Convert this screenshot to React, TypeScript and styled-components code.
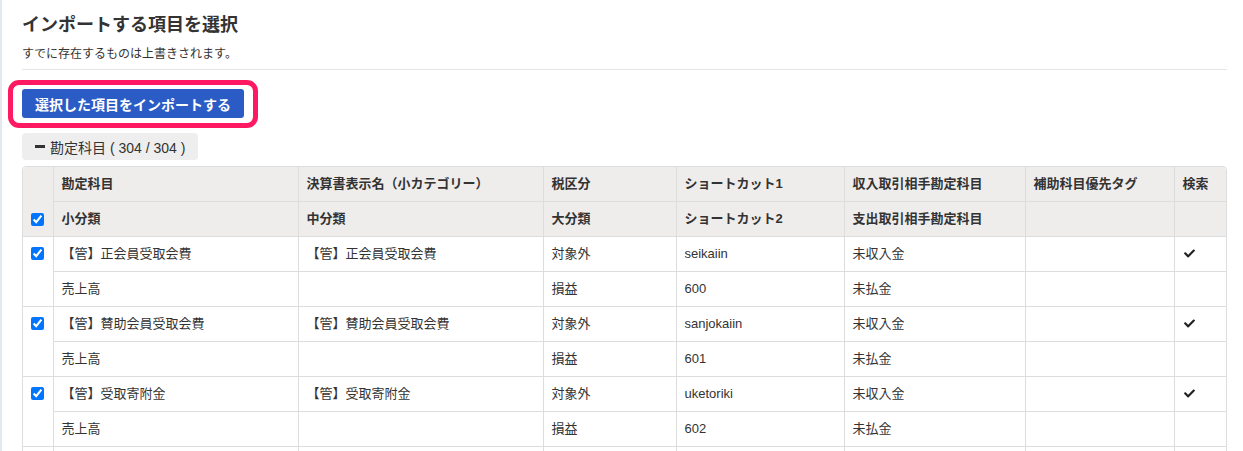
import styled, { createGlobalStyle } from "styled-components";
import { FaCheck } from "react-icons/fa";

const GlobalStyle = createGlobalStyle`
  html, body {
    margin: 0;
    background: #ffffff;
  }
  body {
    font-family: "Liberation Sans", "Noto Sans CJK JP", sans-serif;
    color: #333333;
  }
`;

const Page = styled.div`
  min-height: 451px;
  border-left: 2px solid #e4e8f0;
  padding: 13px 16px 0 20px;
  box-sizing: border-box;
`;

const Title = styled.h2`
  margin: 0;
  font-size: 18px;
  line-height: 25px;
  font-weight: bold;
  color: #333333;
`;

const Lead = styled.p`
  margin: 7px 0 0;
  font-size: 12px;
  line-height: 18px;
`;

const Divider = styled.hr`
  margin: 6px 0 0;
  border: none;
  border-top: 1px solid #e6e6e6;
`;

const ActionRow = styled.div`
  margin-top: 19px;
  display: flex;
`;

const Highlight = styled.div`
  position: relative;
  &::after {
    content: "";
    position: absolute;
    top: -9px;
    left: -14px;
    right: -14px;
    bottom: -10px;
    border: 5px solid #ff1862;
    border-radius: 11px;
    pointer-events: none;
  }
`;

const PrimaryButton = styled.button`
  height: 29px;
  padding: 0 13px;
  border: none;
  border-radius: 3px;
  background: #2b5cc6;
  color: #ffffff;
  font-family: inherit;
  font-size: 14px;
  font-weight: bold;
  cursor: pointer;
`;

const TabBlock = styled.div`
  margin-top: 15px;
  display: flex;
`;

const GroupTab = styled.div`
  display: inline-flex;
  align-items: center;
  gap: 5px;
  height: 27px;
  padding: 0 13px;
  background: #eeeeee;
  border-radius: 4px;
  font-size: 14px;
  color: #333333;
`;

const MinusBar = styled.span`
  width: 10px;
  height: 3px;
  background: #333333;
`;

const TableFrame = styled.div`
  margin-top: 6px;
  border: 1px solid #dddddd;
  border-radius: 4px;
  overflow: hidden;
`;

const Table = styled.table`
  width: 100%;
  table-layout: fixed;
  border-collapse: collapse;
  border-style: hidden;
  font-size: 13px;
`;

const Row = styled.tr<{ $top?: boolean }>`
  height: ${(p) => (p.$top ? "34px" : "35px")};
`;

const Cell = styled.td<{ $head?: boolean }>`
  padding: 0 8px;
  border: 1px solid #dddddd;
  background: ${(p) => (p.$head ? "#efedeb" : "#ffffff")};
  font-weight: ${(p) => (p.$head ? "bold" : "normal")};
  color: #333333;
  text-align: left;
  line-height: 18px;
  vertical-align: middle;
  white-space: nowrap;
  overflow: hidden;
`;

const CheckCell = styled(Cell)<{ $bottom?: boolean }>`
  padding: ${(p) => (p.$bottom ? "0 0 10px 0" : "10px 0 0 0")};
  vertical-align: ${(p) => (p.$bottom ? "bottom" : "top")};
`;

const Box = styled.input`
  width: 13px;
  height: 13px;
  margin: 0 0 0 8px;
  display: block;
`;

const Tick = styled(FaCheck)`
  display: block;
  width: 11px;
  height: 11px;
  color: #222222;
  margin-left: 1px;
`;

type Account = {
  name: string;
  display: string;
  tax: string;
  short1: string;
  income: string;
  tag: string;
  search: boolean;
  small: string;
  large: string;
  short2: string;
  expense: string;
};

const accounts: Account[] = [
  {
    name: "【管】正会員受取会費",
    display: "【管】正会員受取会費",
    tax: "対象外",
    short1: "seikaiin",
    income: "未収入金",
    tag: "",
    search: true,
    small: "売上高",
    large: "損益",
    short2: "600",
    expense: "未払金",
  },
  {
    name: "【管】賛助会員受取会費",
    display: "【管】賛助会員受取会費",
    tax: "対象外",
    short1: "sanjokaiin",
    income: "未収入金",
    tag: "",
    search: true,
    small: "売上高",
    large: "損益",
    short2: "601",
    expense: "未払金",
  },
  {
    name: "【管】受取寄附金",
    display: "【管】受取寄附金",
    tax: "対象外",
    short1: "uketoriki",
    income: "未収入金",
    tag: "",
    search: true,
    small: "売上高",
    large: "損益",
    short2: "602",
    expense: "未払金",
  },
];

const widths = [30, 245, 245, 133, 168, 181, 149, 53];

const App = () => {
  return (
    <>
      <GlobalStyle />
      <Page>
        <Title>インポートする項目を選択</Title>
        <Lead>すでに存在するものは上書きされます。</Lead>
        <Divider />
        <ActionRow>
          <Highlight>
            <PrimaryButton>選択した項目をインポートする</PrimaryButton>
          </Highlight>
        </ActionRow>
        <TabBlock>
          <GroupTab>
            <MinusBar />
            勘定科目 ( 304 / 304 )
          </GroupTab>
        </TabBlock>
        <TableFrame>
          <Table>
            <colgroup>
              {widths.map((w, i) => (
                <col key={i} style={{ width: w }} />
              ))}
            </colgroup>
            <thead>
              <Row $top>
                <CheckCell as="th" $head $bottom rowSpan={2}>
                  <Box type="checkbox" defaultChecked />
                </CheckCell>
                <Cell as="th" $head>勘定科目</Cell>
                <Cell as="th" $head>決算書表示名（小カテゴリー）</Cell>
                <Cell as="th" $head>税区分</Cell>
                <Cell as="th" $head>ショートカット1</Cell>
                <Cell as="th" $head>収入取引相手勘定科目</Cell>
                <Cell as="th" $head>補助科目優先タグ</Cell>
                <Cell as="th" $head>検索</Cell>
              </Row>
              <Row>
                <Cell as="th" $head>小分類</Cell>
                <Cell as="th" $head>中分類</Cell>
                <Cell as="th" $head>大分類</Cell>
                <Cell as="th" $head>ショートカット2</Cell>
                <Cell as="th" $head>支出取引相手勘定科目</Cell>
                <Cell as="th" $head />
                <Cell as="th" $head />
              </Row>
            </thead>
            {accounts.map((a) => (
              <tbody key={a.short2}>
                <Row>
                  <CheckCell rowSpan={2}>
                    <Box type="checkbox" defaultChecked />
                  </CheckCell>
                  <Cell>{a.name}</Cell>
                  <Cell>{a.display}</Cell>
                  <Cell>{a.tax}</Cell>
                  <Cell>{a.short1}</Cell>
                  <Cell>{a.income}</Cell>
                  <Cell>{a.tag}</Cell>
                  <Cell>{a.search && <Tick />}</Cell>
                </Row>
                <Row>
                  <Cell>{a.small}</Cell>
                  <Cell />
                  <Cell>{a.large}</Cell>
                  <Cell>{a.short2}</Cell>
                  <Cell>{a.expense}</Cell>
                  <Cell />
                  <Cell />
                </Row>
              </tbody>
            ))}
            <tbody>
              <Row>
                <CheckCell rowSpan={2} />
                {widths.slice(1).map((w) => (
                  <Cell key={w} />
                ))}
              </Row>
            </tbody>
          </Table>
        </TableFrame>
      </Page>
    </>
  );
};

export default App;
